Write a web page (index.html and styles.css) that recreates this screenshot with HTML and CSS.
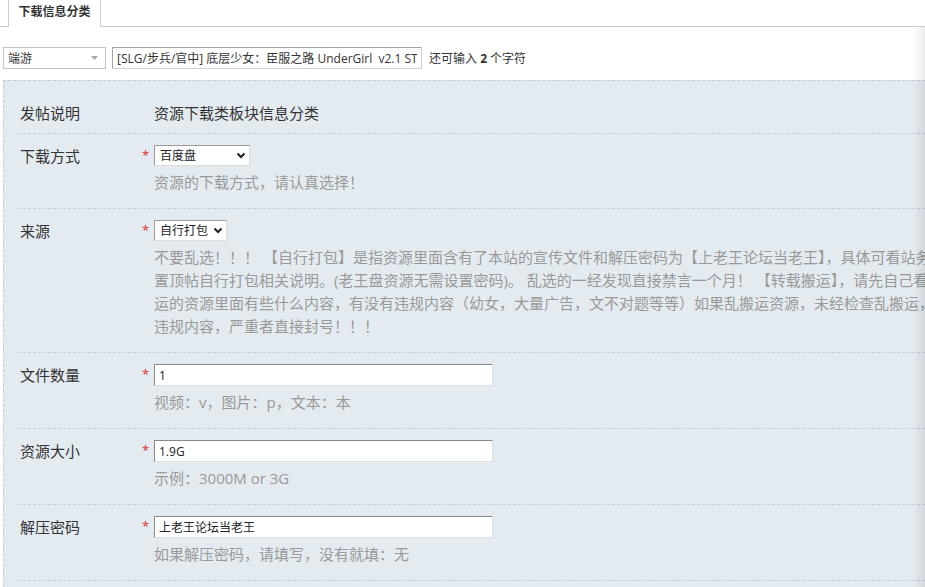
FILE: index.html
```html
<!DOCTYPE html>
<html lang="zh-CN">
<head>
<meta charset="utf-8">
<title>下载信息分类</title>
<link rel="stylesheet" href="styles.css">
</head>
<body>
<div class="page">
  <div class="tabs"><span class="tab">下载信息分类</span></div>

  <div class="toolbar">
    <div class="typesel">
      <span>端游</span>
      <svg class="tri" width="7" height="4" viewBox="0 0 7 4"><path d="M0 0H7L3.5 4Z" fill="#a8a8a8"/></svg>
    </div>
    <input class="subject" type="text" value="[SLG/步兵/官中] 底层少女：臣服之路 UnderGirl  v2.1 ST">
    <span class="remain">还可输入 <b>2</b> 个字符</span>
  </div>

  <div class="panel">
    <div class="row intro">
      <div class="label">发帖说明</div>
      <div class="star"></div>
      <div class="field"><div class="val">资源下载类板块信息分类</div></div>
    </div>

    <div class="row">
      <div class="label">下载方式</div>
      <div class="star">*</div>
      <div class="field">
        <div class="selwrap">
          <select class="sel sel-wide"><option>百度盘</option></select>
          <svg class="chev" width="10" height="7" viewBox="0 0 10 7"><path d="M1.5 1.5L5 5L8.5 1.5" fill="none" stroke="#222" stroke-width="2"/></svg>
        </div>
        <div class="hint">资源的下载方式，请认真选择！</div>
      </div>
    </div>

    <div class="row">
      <div class="label">来源</div>
      <div class="star">*</div>
      <div class="field">
        <div class="selwrap">
          <select class="sel sel-narrow"><option>自行打包</option></select>
          <svg class="chev" width="10" height="7" viewBox="0 0 10 7"><path d="M1.5 1.5L5 5L8.5 1.5" fill="none" stroke="#222" stroke-width="2"/></svg>
        </div>
        <div class="hint">不要乱选！！！ 【自行打包】是指资源里面含有了本站的宣传文件和解压密码为【上老王论坛当老王】，具体可看站务区<br>置顶帖自行打包相关说明。(老王盘资源无需设置密码)。 乱选的一经发现直接禁言一个月！ 【转载搬运】，请先自己看看搬<br>运的资源里面有些什么内容，有没有违规内容（幼女，大量广告，文不对题等等）如果乱搬运资源，未经检查乱搬运，发现有<br>违规内容，严重者直接封号！！！</div>
      </div>
    </div>

    <div class="row">
      <div class="label">文件数量</div>
      <div class="star">*</div>
      <div class="field">
        <input class="px" type="text" value="1">
        <div class="hint">视频：v，图片：p，文本：本</div>
      </div>
    </div>

    <div class="row">
      <div class="label">资源大小</div>
      <div class="star">*</div>
      <div class="field">
        <input class="px" type="text" value="1.9G">
        <div class="hint">示例：3000M or 3G</div>
      </div>
    </div>

    <div class="row">
      <div class="label">解压密码</div>
      <div class="star">*</div>
      <div class="field">
        <input class="px" type="text" value="上老王论坛当老王">
        <div class="hint">如果解压密码，请填写，没有就填：无</div>
      </div>
    </div>
  </div>

  <div class="edge-shadow"></div>
</div>
</body>
</html>
```

FILE: styles.css
```css
html, body {
  margin: 0;
  padding: 0;
  background: #fff;
  overflow: hidden;
}

body {
  font-family: "Open Sans", "Noto Sans CJK SC", sans-serif;
  font-size: 12px;
  color: #333;
}

.page {
  width: 1100px;
  height: 100vh;
  overflow: hidden;
}

/* tab bar */
.tabs {
  display: flex;
  height: 26px;
  padding-left: 8px;
  border-bottom: 1px solid #cdcdcd;
}

.tab {
  box-sizing: border-box;
  width: 93px;
  height: 27px;
  margin-bottom: -1px;
  border-left: 1px solid #cdcdcd;
  border-right: 1px solid #cdcdcd;
  background: #fff;
  font-weight: bold;
  font-size: 12px;
  line-height: 24px;
  text-align: center;
  color: #333;
}

/* type + subject line */
.toolbar {
  display: flex;
  align-items: center;
  gap: 6px;
  height: 22px;
  margin: 20px 0 11px 3px;
}

.typesel {
  box-sizing: border-box;
  width: 103px;
  height: 22px;
  display: flex;
  align-items: center;
  justify-content: space-between;
  padding: 0 7px 0 4px;
  border: 1px solid #c4c4c4;
  background: #fff;
  color: #333;
}

.subject {
  box-sizing: border-box;
  width: 310px;
  height: 22px;
  margin: 0;
  padding: 0 4px;
  border: 1px solid;
  border-color: #a6a6a6 #d2d2d2 #d2d2d2 #a6a6a6;
  font: 12px "Open Sans", "Noto Sans CJK SC", sans-serif;
  color: #333;
  background: #fff;
}

.remain {
  margin-left: 1px;
  color: #333;
}

/* form panel */
.panel {
  margin-left: 3px;
  padding: 10px 0 0 14px;
  border-top: 1px dashed #c3ccd3;
  border-left: 1px dashed #c3ccd3;
  background: #e4ebf0;
  min-height: 600px;
}

.row {
  display: grid;
  grid-template-columns: 120px 14px 1fr;
  align-items: start;
  padding: 11px 0 14px 2px;
  border-bottom: 1px dashed #c6ced5;
}

.row.intro {
  padding-bottom: 9px;
}

.label {
  font-size: 15px;
  line-height: 22px;
  color: #333;
}

.star {
  padding-left: 2px;
  font-size: 13px;
  line-height: 20px;
  color: #e3242b;
}

.field {
  display: flex;
  flex-direction: column;
  align-items: flex-start;
}

.val {
  font-size: 15px;
  line-height: 22px;
  color: #333;
}

.selwrap {
  position: relative;
  display: inline-block;
  height: 21px;
}

.sel {
  -webkit-appearance: none;
  appearance: none;
  box-sizing: border-box;
  height: 21px;
  margin: 0;
  padding: 0 0 0 5px;
  border: 1px solid;
  border-color: #9a9a9a #dcdcdc #dcdcdc #9a9a9a;
  border-radius: 0;
  background: #fff;
  font: 12px "Open Sans", "Noto Sans CJK SC", sans-serif;
  color: #222;
  display: block;
}

.sel-wide {
  width: 96px;
}

.sel-narrow {
  width: 73px;
}

.chev {
  position: absolute;
  right: 4px;
  top: 7px;
  pointer-events: none;
}

.px {
  box-sizing: border-box;
  width: 339px;
  height: 22px;
  margin: 0;
  padding: 0 4px;
  border: 1px solid;
  border-color: #8a8a8a #e0e0e0 #e0e0e0 #8a8a8a;
  background: #fff;
  font: 12px "Open Sans", "Noto Sans CJK SC", sans-serif;
  color: #222;
}

.hint {
  margin-top: 5px;
  font-size: 15px;
  line-height: 23px;
  color: #999;
  white-space: nowrap;
}

.edge-shadow {
  position: fixed;
  top: 27px;
  right: 0;
  bottom: 0;
  width: 12px;
  background: linear-gradient(to right, rgba(0, 0, 0, 0), rgba(0, 0, 0, 0.08));
  pointer-events: none;
}
```
